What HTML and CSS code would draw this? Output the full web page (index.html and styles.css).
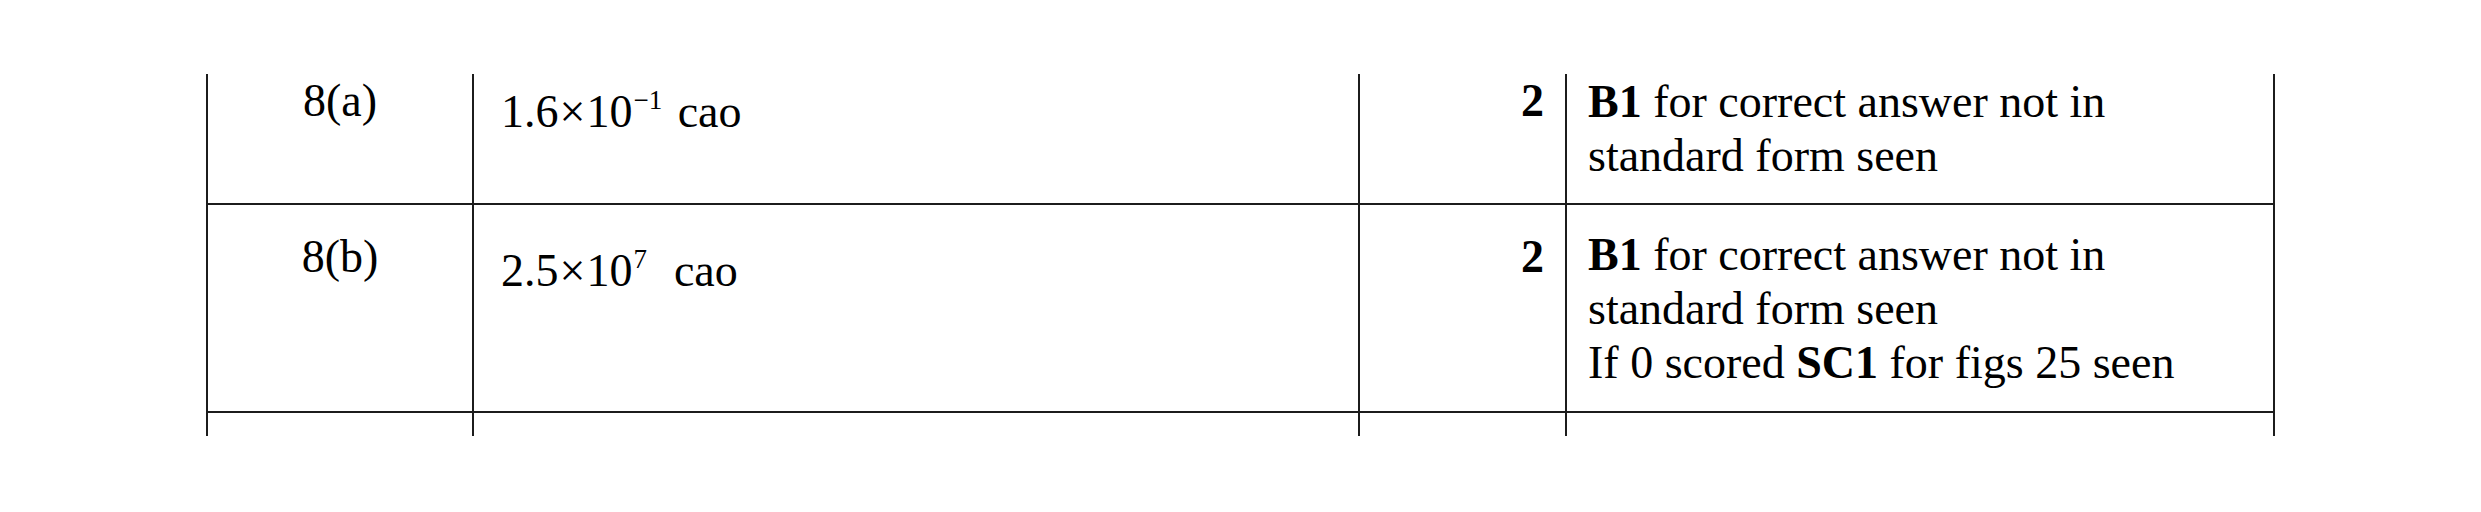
FILE: index.html
```html
<!DOCTYPE html>
<html lang="en">
<head>
<meta charset="utf-8">
<title>Mark scheme</title>
<link rel="stylesheet" href="styles.css">
</head>
<body>
<div class="sheet">
  <table class="marks">
    <colgroup>
      <col class="w-q">
      <col class="w-ans">
      <col class="w-mk">
      <col class="w-note">
    </colgroup>
    <tbody>
      <tr class="row row-a">
        <td class="q">8(a)</td>
        <td class="ans"><span class="expr">1.6<span class="times">×</span>10<sup class="exp">−1</sup> cao</span></td>
        <td class="mk">2</td>
        <td class="note"><b>B1</b> for correct answer not in<br>standard form seen</td>
      </tr>
      <tr class="row row-b">
        <td class="q">8(b)</td>
        <td class="ans"><span class="expr">2.5<span class="times">×</span>10<sup class="exp">7</sup>&nbsp; cao</span></td>
        <td class="mk">2</td>
        <td class="note"><b>B1</b> for correct answer not in<br>standard form seen<br>If 0 scored <b>SC1</b> for figs 25 seen</td>
      </tr>
      <tr class="row row-c">
        <td class="q"></td>
        <td class="ans"></td>
        <td class="mk"></td>
        <td class="note"></td>
      </tr>
    </tbody>
  </table>
</div>
</body>
</html>
```

FILE: styles.css
```css
html, body {
  margin: 0;
  padding: 0;
  background: #ffffff;
}

body {
  font-family: "Liberation Serif", "Times New Roman", serif;
  color: #000000;
  height: 512px;
  overflow: hidden;
}

.sheet {
  padding: 74px 0 0 206px;
}

.marks {
  border-collapse: separate;
  border-spacing: 0;
  table-layout: fixed;
  width: 2069px;
  font-size: 46px;
  line-height: 54px;
}

.w-q { width: 266px; }
.w-ans { width: 886px; }
.w-mk { width: 207px; }
.w-note { width: 710px; }

.marks td {
  box-sizing: border-box;
  vertical-align: top;
  padding: 0;
  border-left: 2px solid #1c1c1c;
  border-bottom: 2px solid #1c1c1c;
}

.marks td.note {
  border-right: 2px solid #1c1c1c;
}

.row-a td { height: 131px; }
.row-b td { height: 208px; }
.row-c td { height: 23px; border-bottom: none; }

.q {
  text-align: center;
}

.ans {
  padding-left: 27px !important;
}

.mk {
  text-align: right;
  font-weight: bold;
  padding-right: 21px !important;
}

.note {
  padding-left: 21px !important;
}

.row-a .q,
.row-a .mk { padding-top: 0; }
.row-a .note { padding-top: 1px; }
.row-a .ans { padding-top: 11px; }

.row-b .q,
.row-b .mk { padding-top: 25px; }
.row-b .note { padding-top: 23px; }
.row-b .ans { padding-top: 39px; }

.expr {
  white-space: nowrap;
}

.times {
  margin: 0 1px;
}

.exp {
  font-size: 27px;
  line-height: 0;
  vertical-align: 18px;
  margin-left: 1px;
  margin-right: 4px;
}
```
